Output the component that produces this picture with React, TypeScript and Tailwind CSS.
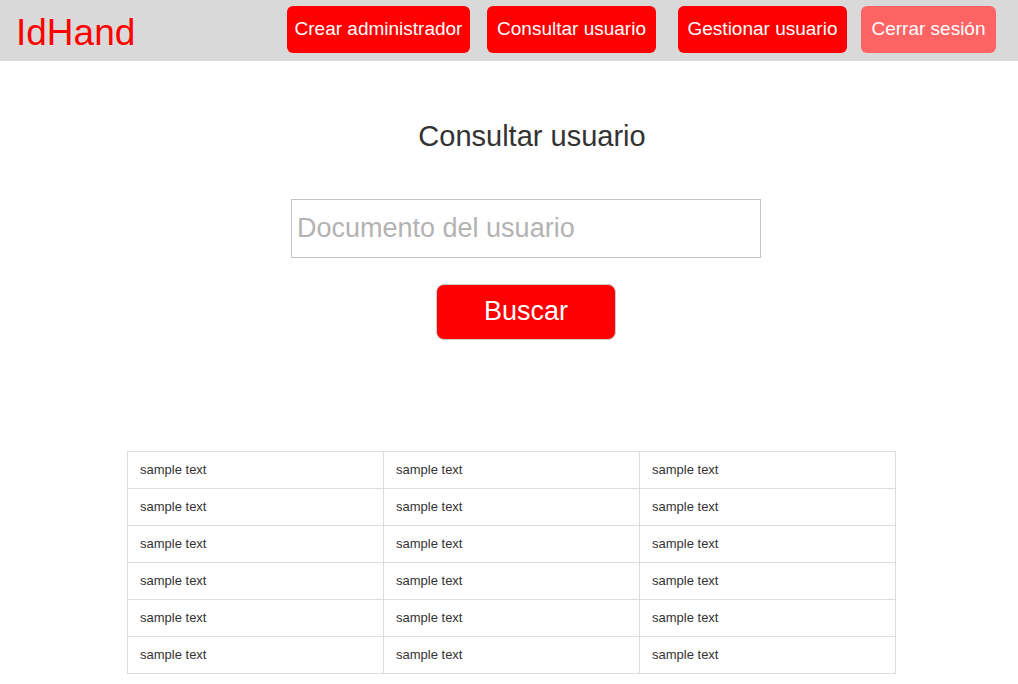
const navItems = [
  { label: "Crear administrador", style: "w-[183px] bg-[#ff0000]" },
  { label: "Consultar usuario", style: "ml-[17px] w-[169px] bg-[#ff0000]" },
  { label: "Gestionar usuario", style: "ml-[22px] w-[169px] bg-[#ff0000]" },
  { label: "Cerrar sesión", style: "ml-[14px] w-[135px] bg-[#ff6464]" },
];

const rows = Array.from({ length: 6 }, () => ["sample text", "sample text", "sample text"]);

export default function App() {
  return (
    <div className="min-h-screen bg-white font-['Liberation_Sans',Arial,sans-serif] text-[#333333]">
      <header className="flex items-start justify-between bg-[#d9d9d9] pr-[22px] pb-2 pl-4 pt-[6px]">
        <a href="#" className="pt-[7px] text-[37px] leading-[40px] text-[#ff0000]">
          IdHand
        </a>
        <nav className="flex">
          {navItems.map((item) => (
            <button
              key={item.label}
              type="button"
              className={`h-[47px] rounded-md text-[19px] whitespace-nowrap text-white ${item.style}`}
            >
              {item.label}
            </button>
          ))}
        </nav>
      </header>

      <main className="flex flex-col items-center">
        <h1 className="mt-[58px] ml-[46px] text-[29px] leading-[34px]">Consultar usuario</h1>
        <form className="mt-[46px] ml-[34px] flex flex-col items-center" onSubmit={(e) => e.preventDefault()}>
          <input
            type="text"
            aria-label="Documento del usuario"
            placeholder="Documento del usuario"
            className="h-[59px] w-[470px] border border-[#c4c4c4] px-[5px] text-[27px] placeholder:text-[#b3b3b3]"
          />
          <button
            type="submit"
            className="mt-[26px] h-[56px] w-[180px] rounded-lg border border-[#cccccc] bg-[#ff0000] pb-[2px] text-[27px] text-white"
          >
            Buscar
          </button>
        </form>
        <table className="mt-[111px] ml-[5px] mb-2 w-[769px] table-fixed border-collapse text-[13px] leading-4">
          <tbody>
            {rows.map((cells, row) => (
              <tr key={row} className="h-[37px]">
                {cells.map((cell, column) => (
                  <td key={column} className="border border-[#dddddd] px-3 py-0">
                    {cell}
                  </td>
                ))}
              </tr>
            ))}
          </tbody>
        </table>
      </main>
    </div>
  );
}
